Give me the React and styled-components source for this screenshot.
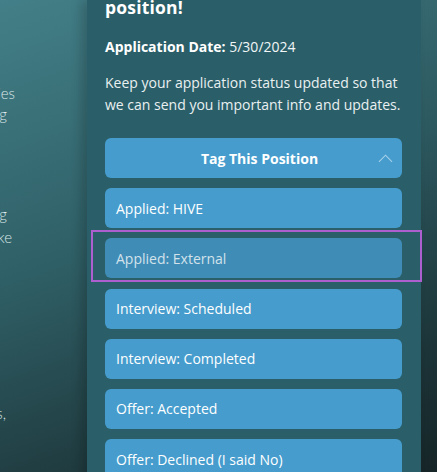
import React from 'react';
import styled, { createGlobalStyle } from 'styled-components';

const GlobalStyle = createGlobalStyle`
  html, body {
    margin: 0;
    padding: 0;
    height: 100%;
    overflow: hidden;
  }
  body {
    font-family: 'Open Sans', 'Liberation Sans', sans-serif;
    background: linear-gradient(160deg, #437f88 0%, #2f5f66 45%, #1f3a3e 80%, #192a2d 100%);
    color: #fff;
  }
`;

const tags = [
  'Applied: HIVE',
  'Applied: External',
  'Interview: Scheduled',
  'Interview: Completed',
  'Offer: Accepted',
  'Offer: Declined (I said No)',
];

const App = () => {
  return (
    <>
      <GlobalStyle />
      <Page>
        <LeftColumn>
          <BackText top={83} end={15}>new opportunities</BackText>
          <BackText top={0} end={7}>are waiting</BackText>
          <BackText top={79} end={7}>everything</BackText>
          <BackText top={2} end={12}>you like</BackText>
          <BackText top={155} end={6}>jobs,</BackText>
        </LeftColumn>

        <Panel>
          <Heading>position!</Heading>
          <DateLine>
            <strong>Application Date:</strong> 5/30/2024
          </DateLine>
          <Blurb>
            Keep your application status updated so that we can send you important info and updates.
          </Blurb>

          <TagList>
            <TagHeader>
              <HeaderLabel>Tag This Position</HeaderLabel>
              <Chevron viewBox="0 0 16 9" aria-hidden="true">
                <polyline points="1,8 8,1 15,8" />
              </Chevron>
            </TagHeader>
            {tags.map((tag, i) => (
              <TagItem key={tag} $active={i === 1}>
                {tag}
              </TagItem>
            ))}
          </TagList>
        </Panel>

        <RightStrip />
      </Page>
    </>
  );
};

const Page = styled.div`
  display: grid;
  grid-template-columns: 87px 334px 16px;
  height: 472px;
  overflow: hidden;
`;

const LeftColumn = styled.div`
  overflow: hidden;
  font-family: 'Lato', 'Liberation Sans', sans-serif;
  font-weight: 300;
  font-size: 15px;
  line-height: 21px;
  color: #dbe7e8;
`;

const BackText = styled.div`
  display: flex;
  justify-content: flex-end;
  white-space: nowrap;
  width: ${(p) => p.end}px;
  margin-top: ${(p) => p.top}px;
`;

const Panel = styled.section`
  background: #2a5e68;
  box-shadow: -6px 0 10px rgba(0, 0, 0, 0.18);
  padding: 0 19px 0 18px;
  position: relative;
  z-index: 1;
`;

const Heading = styled.h1`
  margin: -4px 0 0;
  font-size: 17.5px;
  line-height: 22px;
  font-weight: 700;
  letter-spacing: 0.2px;
`;

const DateLine = styled.p`
  margin: 18px 0 0;
  font-size: 14px;
  line-height: 22px;
  color: #f2f6f7;

  strong {
    font-weight: 700;
    color: #fff;
  }
`;

const Blurb = styled.p`
  margin: 14px 0 0;
  font-size: 14px;
  line-height: 22px;
  color: #e9f0f1;
`;

const TagList = styled.div`
  margin-top: 22px;
  display: flex;
  flex-direction: column;
  gap: 10.2px;
`;

const TagHeader = styled.div`
  height: 40px;
  display: flex;
  align-items: center;
  padding: 0 9px 0 36px;
  background: #459ccd;
  border-radius: 6px;
`;

const HeaderLabel = styled.span`
  flex: 1;
  text-align: center;
  font-size: 14px;
  font-weight: 700;
  color: #fff;
`;

const Chevron = styled.svg`
  width: 15px;
  height: 9px;
  fill: none;
  stroke: #a7d0ea;
  stroke-width: 1.2;
`;

const TagItem = styled.div`
  position: relative;
  height: 40px;
  display: flex;
  align-items: center;
  padding: 0 11px;
  border-radius: 6px;
  font-size: 14px;
  background: ${(p) => (p.$active ? '#3f8cb7' : '#459ccd')};
  color: ${(p) => (p.$active ? '#d3e2ea' : '#fff')};

  &::after {
    content: '';
    display: ${(p) => (p.$active ? 'block' : 'none')};
    position: absolute;
    top: -8px;
    left: -14px;
    right: -20px;
    bottom: -4px;
    border: 2px solid #ad5fd0;
    pointer-events: none;
  }
`;

const RightStrip = styled.div`
  background: linear-gradient(180deg, rgba(0, 0, 0, 0.05), rgba(0, 0, 0, 0.12));
`;

export default App;
